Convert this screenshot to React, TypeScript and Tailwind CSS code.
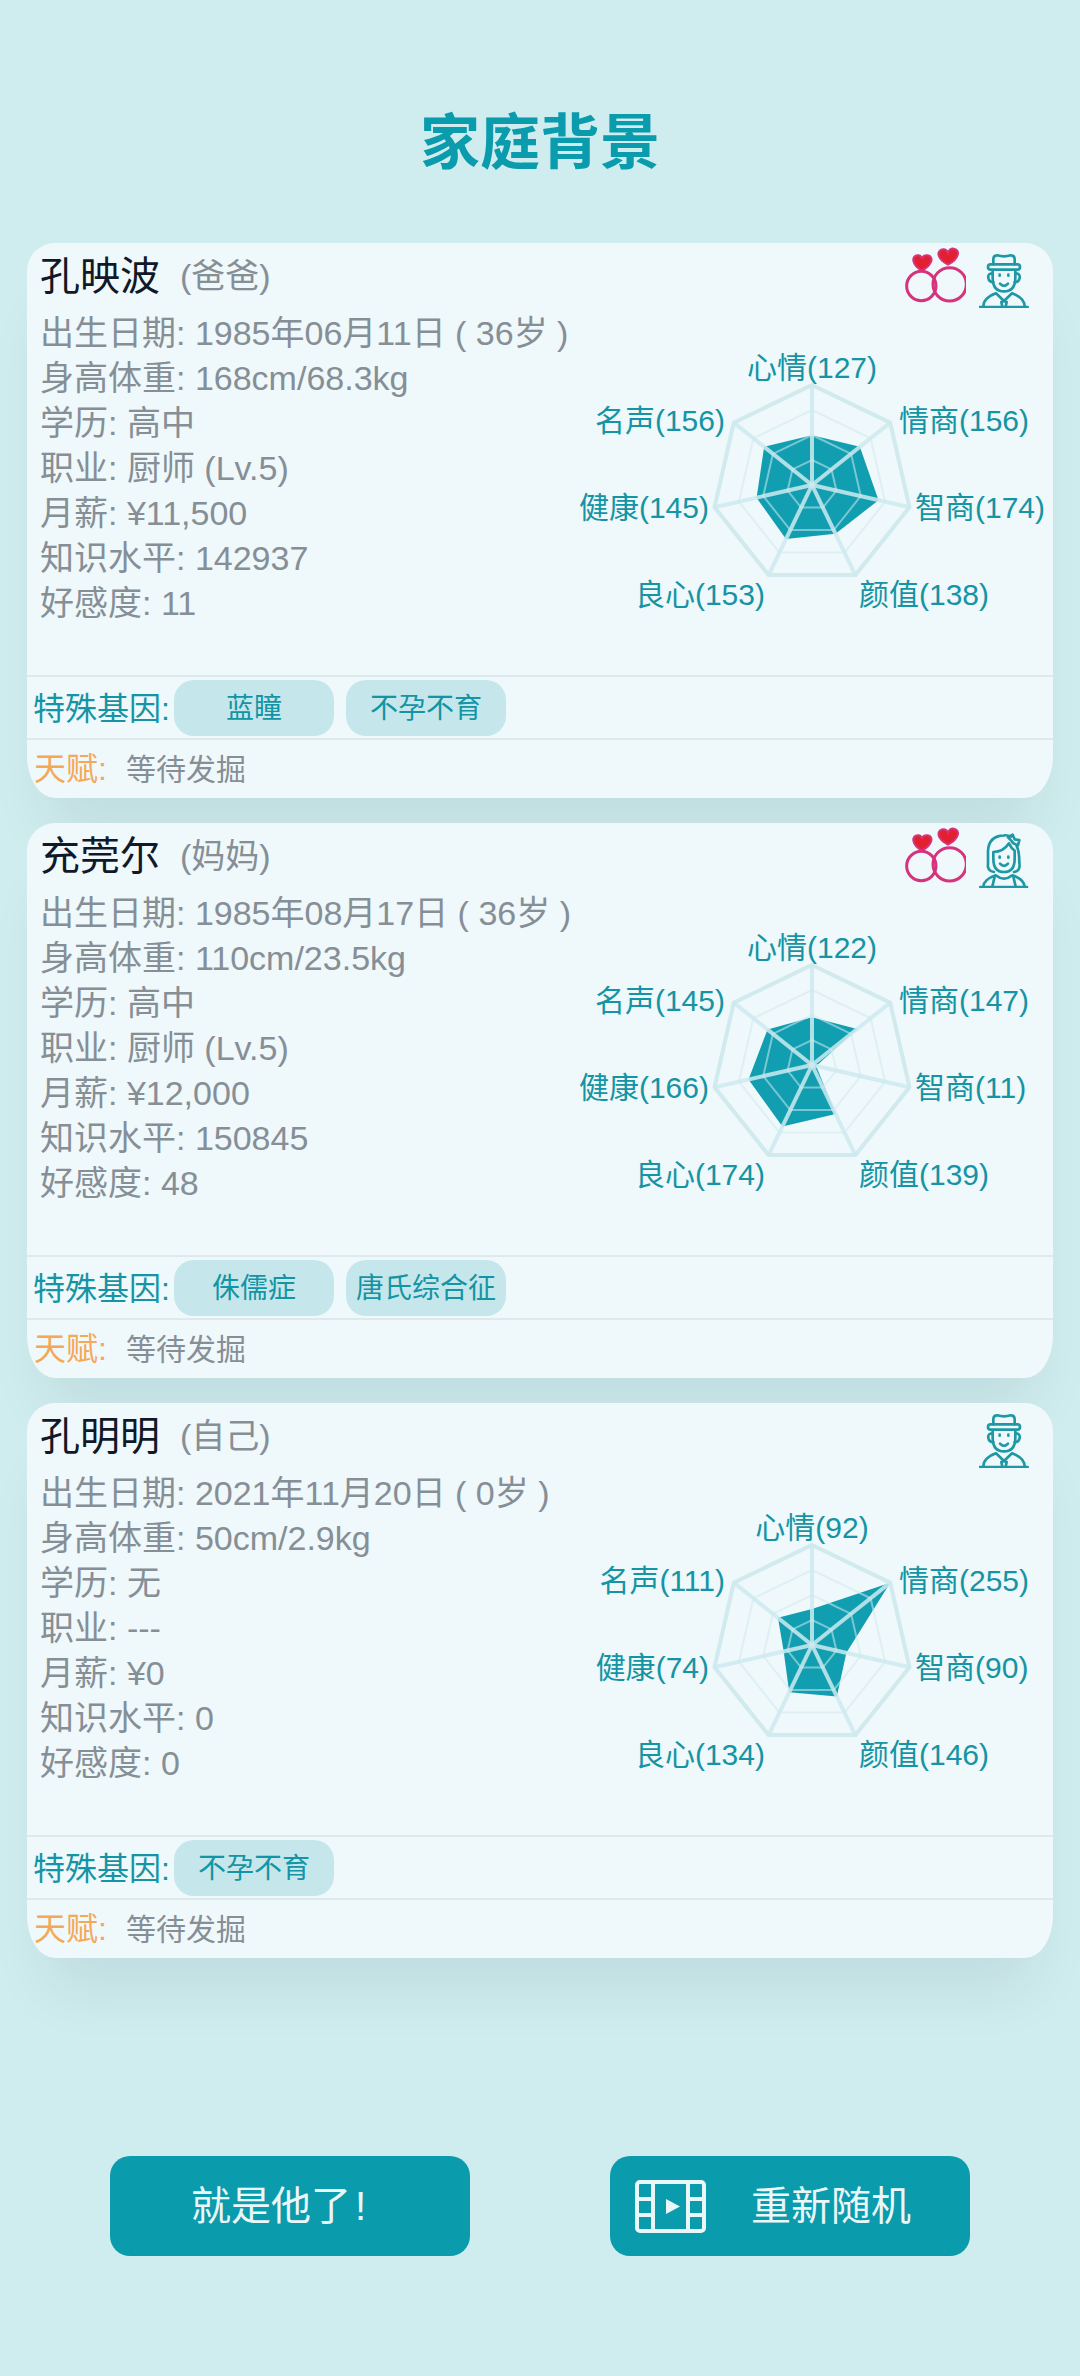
const FONT = "font-['Liberation_Sans','Noto_Sans_CJK_SC',sans-serif]";

const CX = 239;
const CY = 175;

function point(i: number, r: number) {
  const a = (i * 2 * Math.PI) / 7;
  return [CX + r * Math.sin(a), CY - r * Math.cos(a)];
}

function ring(r: number) {
  return [0, 1, 2, 3, 4, 5, 6].map((i) => point(i, r).join(",")).join(" ");
}

type Member = {
  name: string;
  role: string;
  married: boolean;
  avatar: "man" | "woman";
  info: string[];
  stats: number[];
  genes: string[];
};

const members: Member[] = [
  {
    name: "孔映波",
    role: "(爸爸)",
    married: true,
    avatar: "man",
    info: ["出生日期: 1985年06月11日 ( 36岁 )", "身高体重: 168cm/68.3kg", "学历: 高中", "职业: 厨师 (Lv.5)", "月薪: ¥11,500", "知识水平: 142937", "好感度: 11"],
    stats: [127, 156, 174, 138, 153, 145, 156],
    genes: ["蓝瞳", "不孕不育"],
  },
  {
    name: "充莞尔",
    role: "(妈妈)",
    married: true,
    avatar: "woman",
    info: ["出生日期: 1985年08月17日 ( 36岁 )", "身高体重: 110cm/23.5kg", "学历: 高中", "职业: 厨师 (Lv.5)", "月薪: ¥12,000", "知识水平: 150845", "好感度: 48"],
    stats: [122, 147, 11, 139, 174, 166, 145],
    genes: ["侏儒症", "唐氏综合征"],
  },
  {
    name: "孔明明",
    role: "(自己)",
    married: false,
    avatar: "man",
    info: ["出生日期: 2021年11月20日 ( 0岁 )", "身高体重: 50cm/2.9kg", "学历: 无", "职业: ---", "月薪: ¥0", "知识水平: 0", "好感度: 0"],
    stats: [92, 255, 90, 146, 134, 74, 111],
    genes: ["不孕不育"],
  },
];

// label anchors, svg origin is x=573, y=310 on the page
const labels = [
  { name: "心情", x: 239, y: 57, anchor: "middle" },
  { name: "情商", x: 326, y: 110, anchor: "start" },
  { name: "智商", x: 342, y: 197, anchor: "start" },
  { name: "颜值", x: 286, y: 284, anchor: "start" },
  { name: "良心", x: 192, y: 284, anchor: "end" },
  { name: "健康", x: 136, y: 197, anchor: "end" },
  { name: "名声", x: 152, y: 110, anchor: "end" },
] as const;

function Radar({ stats }: { stats: number[] }) {
  const data = stats.map((v, i) => point(i, (v / 255) * 100).join(",")).join(" ");
  return (
    <svg width="480" height="365" viewBox="0 0 480 365" className="-mt-px shrink-0">
      <polygon points={data} fill="#119eb1" />
      {[25, 50, 75].map((r) => (
        <polygon key={r} points={ring(r)} fill="none" stroke="#cfeaee" strokeOpacity="0.55" strokeWidth="2" />
      ))}
      <polygon points={ring(100)} fill="none" stroke="#d0eaee" strokeWidth="4" />
      {[0, 1, 2, 3, 4, 5, 6].map((i) => {
        const [x, y] = point(i, 100);
        return <line key={i} x1={CX} y1={CY} x2={x} y2={y} stroke="#cdeaee" strokeOpacity="0.85" strokeWidth="4" />;
      })}
      {labels.map((l, i) => (
        <text key={l.name} x={l.x} y={l.y} textAnchor={l.anchor} dominantBaseline="central" fontSize="30" fill="#1494a4">
          {l.name}({stats[i]})
        </text>
      ))}
    </svg>
  );
}

function Rings() {
  return (
    <svg width="64" height="60" viewBox="60 25 192 180" className="-mt-[2px]">
      <circle cx="118" cy="148" r="44" fill="none" stroke="#d6337d" strokeWidth="9" />
      <circle cx="203" cy="143" r="50" fill="none" stroke="#d6337d" strokeWidth="9" />
      <path d="M120 102C88 84 88 58 106 56C114 54 119 60 120 66C122 58 130 54 138 56C156 60 152 84 120 102Z" fill="#e3202e" stroke="#d6337d" strokeWidth="6" />
      <path d="M198 84C164 66 162 42 182 38C190 36 196 42 198 48C200 40 208 34 216 36C236 40 232 66 198 84Z" fill="#e3202e" stroke="#d6337d" strokeWidth="6" />
    </svg>
  );
}

function Man() {
  return (
    <svg width="50" height="56" viewBox="295 48 150 168" fill="none" stroke="#1f98a6" strokeWidth="8" strokeLinecap="round" strokeLinejoin="round">
      <path d="M338 85V70Q338 58 350 58Q370 64 390 58Q402 58 402 70V85" />
      <rect x="322" y="85" width="96" height="16" rx="8" />
      <path d="M336 102V125Q336 166 370 166Q404 166 404 125V102" />
      <path d="M335 112Q321 112 323 126Q326 140 338 138M405 112Q419 112 417 126Q414 140 402 138" />
      <path d="M357 116V119M383 116V119" />
      <path d="M358 143Q370 156 382 143" />
      <path d="M308 212Q308 186 346 172L370 195L394 172Q432 186 432 212" />
      <path d="M362 198L370 195L378 198L375 212M365 212L362 198" />
      <path d="M297 213H441" />
    </svg>
  );
}

function Woman() {
  return (
    <svg width="50" height="56" viewBox="295 48 150 168" fill="none" stroke="#1f98a6" strokeWidth="8" strokeLinecap="round" strokeLinejoin="round">
      <path d="M340 168Q318 166 322 140V105Q324 60 370 58Q382 57 392 62" />
      <path d="M408 90Q416 105 416 140Q420 166 400 168" />
      <path d="M338 108Q368 108 385 82Q392 98 402 104V128Q402 168 370 168Q338 168 338 128Z" />
      <path d="M382 64L396 56L402 70L416 72L412 88L398 82L392 74Z" />
      <path d="M357 122V125M383 122V125" />
      <path d="M358 143Q370 156 382 143" />
      <path d="M308 212Q310 190 345 178Q370 198 395 178Q430 190 432 212" />
      <path d="M335 212L342 182M405 212L398 182" />
      <path d="M299 213H439" />
    </svg>
  );
}

function FilmIcon() {
  return (
    <svg width="71" height="53" viewBox="0 0 71 53" fill="none" stroke="#eaf7f9" strokeWidth="4">
      <rect x="2" y="2" width="67" height="49" rx="3" />
      <path d="M18 2V51M53 2V51M2 19H18M2 35H18M53 19H69M53 35H69" />
      <path d="M31 19L45 26.5L31 34Z" fill="#eaf7f9" stroke="none" />
    </svg>
  );
}

function Card({ m }: { m: Member }) {
  return (
    <div className="flex h-[555px] w-[1026px] flex-col rounded-t-[28px] rounded-bl-[28px_42px] rounded-br-[28px_42px] bg-[#eff8fa] shadow-[0_50px_60px_-20px_rgba(0,40,50,0.08)]">
      <div className="flex h-[432px] flex-col">
        <div className="flex h-[68px] items-start justify-between pl-[13px] pr-[24px]">
          <div className="flex h-[66px] items-center">
            <span className="text-[40px] text-[#111827]">{m.name}</span>
            <span className="ml-[20px] text-[34px] text-[#868e96]">{m.role}</span>
          </div>
          <div className="flex items-start gap-[13px] pt-[4px]">
            {m.married && <Rings />}
            <div className="pt-[5px]">{m.avatar === "man" ? <Man /> : <Woman />}</div>
          </div>
        </div>
        <div className="flex justify-between">
          <div className="min-w-0 whitespace-nowrap pl-[13px] text-[34px] leading-[45px] text-[#868e96]">
            {m.info.map((line) => (
              <div key={line}>{line}</div>
            ))}
          </div>
          <Radar stats={m.stats} />
        </div>
      </div>
      <div className="flex h-[63px] items-center gap-[12px] border-t-2 border-[#dde9eb] pl-[6px]">
        <span className="mr-px w-[128px] whitespace-nowrap pt-[2px] text-[32px] text-[#1494a4]">特殊基因:</span>
        {m.genes.map((g) => (
          <span key={g} className="flex h-[56px] w-[160px] items-center justify-center rounded-[20px] bg-[#c5e7eb] pt-[2px] text-[28px] text-[#1494a4]">
            {g}
          </span>
        ))}
      </div>
      <div className="flex flex-1 items-center border-t-2 border-[#dde9eb] pl-[7px]">
        <span className="w-[92px] text-[32px] text-[#f4a858]">天赋:</span>
        <span className="text-[30px] text-[#868e96]">等待发掘</span>
      </div>
    </div>
  );
}

export default function App() {
  return (
    <div className={`${FONT} h-[2376px] w-full overflow-hidden bg-[#cfecee]`}>
      <h1 className="mb-[59px] mt-[104px] text-center text-[60px] font-bold leading-[80px] text-[#0a9bac]">家庭背景</h1>
      <div className="ml-[27px] flex flex-col gap-[25px]">
        {members.map((m) => (
          <Card key={m.name} m={m} />
        ))}
      </div>
      <div className="mt-[198px] flex justify-between px-[110px]">
        <button className="flex h-[100px] w-[360px] items-center justify-center rounded-[20px] bg-[#0a9bac] pr-[23px] text-[40px] text-[#eaf7f9]">
          就是他了<span className="ml-[4px]">!</span>
        </button>
        <button className="flex h-[100px] w-[360px] items-center rounded-[20px] bg-[#0a9bac] pl-[25px] text-[40px] text-[#eaf7f9]">
          <FilmIcon />
          <span className="ml-[45px]">重新随机</span>
        </button>
      </div>
    </div>
  );
}
